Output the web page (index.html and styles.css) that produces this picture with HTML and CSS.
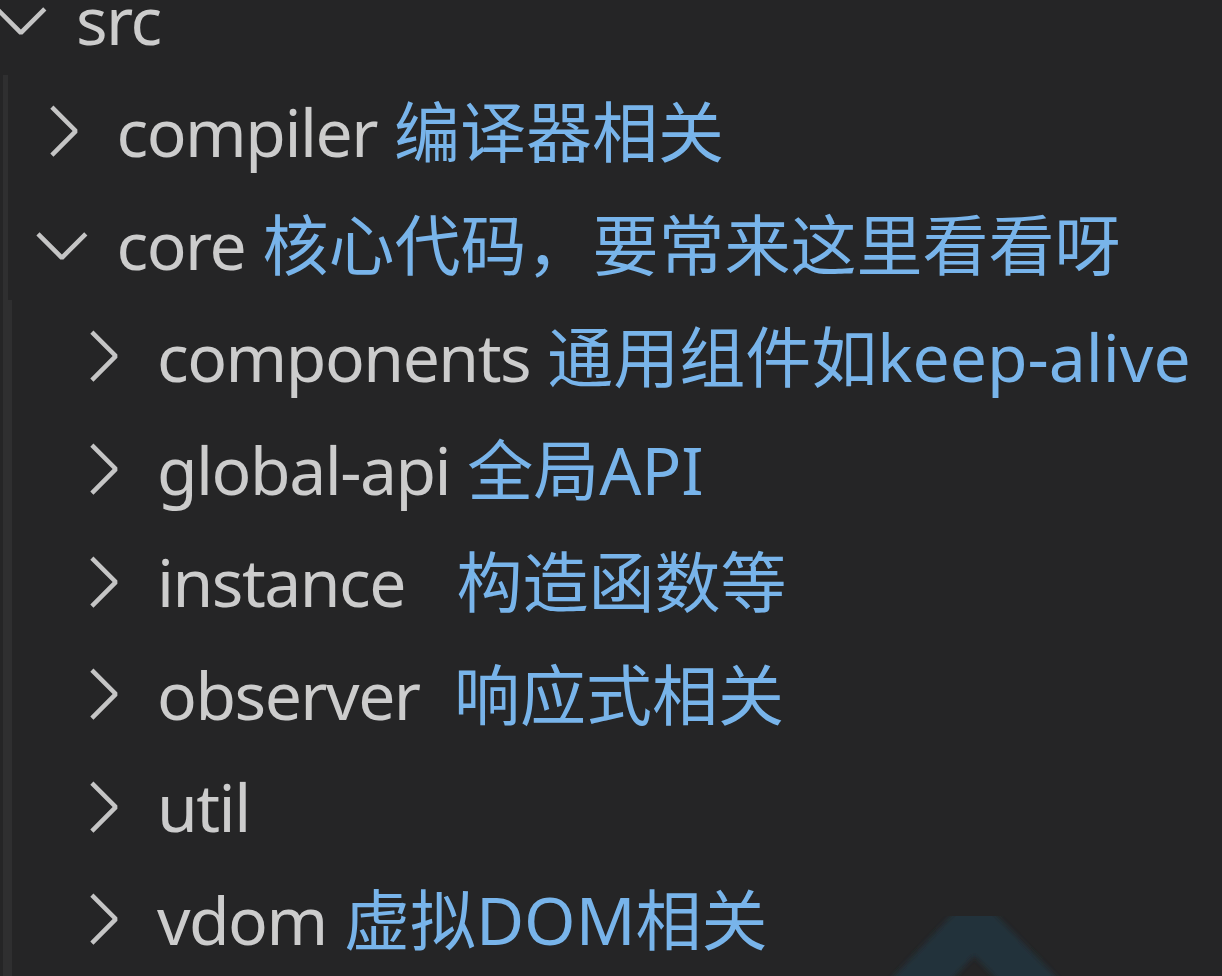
FILE: index.html
```html
<!DOCTYPE html>
<html lang="zh-CN">
<head>
<meta charset="utf-8">
<title>src tree</title>
<link rel="stylesheet" href="styles.css">
</head>
<body>
<div class="tree">
  <div class="row lvl0">
    <svg class="twistie" viewBox="0 0 16 16"><path d="M7.976 10.072l4.357-4.357.62.618L8.284 11h-.618L3 6.333l.619-.618 4.357 4.357z"/></svg>
    <span class="name">src</span>
  </div>
  <div class="group g0">
    <div class="row lvl1">
      <svg class="twistie" viewBox="0 0 16 16"><path d="M10.072 8.024L5.715 3.667l.618-.62L11 7.716v.618L6.333 13l-.618-.619 4.357-4.357z"/></svg>
      <span class="name">compiler</span><span class="note"> 编译器相关</span>
    </div>
    <div class="row lvl1">
      <svg class="twistie" viewBox="0 0 16 16"><path d="M7.976 10.072l4.357-4.357.62.618L8.284 11h-.618L3 6.333l.619-.618 4.357 4.357z"/></svg>
      <span class="name">core</span><span class="note"> 核心代码，要常来这里看看呀</span>
    </div>
    <div class="group g1">
      <div class="row lvl2">
        <svg class="twistie" viewBox="0 0 16 16"><path d="M10.072 8.024L5.715 3.667l.618-.62L11 7.716v.618L6.333 13l-.618-.619 4.357-4.357z"/></svg>
        <span class="name">components</span><span class="note"> 通用组件如keep-alive</span>
      </div>
      <div class="row lvl2">
        <svg class="twistie" viewBox="0 0 16 16"><path d="M10.072 8.024L5.715 3.667l.618-.62L11 7.716v.618L6.333 13l-.618-.619 4.357-4.357z"/></svg>
        <span class="name">global-api</span><span class="note"> 全局API</span>
      </div>
      <div class="row lvl2">
        <svg class="twistie" viewBox="0 0 16 16"><path d="M10.072 8.024L5.715 3.667l.618-.62L11 7.716v.618L6.333 13l-.618-.619 4.357-4.357z"/></svg>
        <span class="name">instance</span><span class="note">   构造函数等</span>
      </div>
      <div class="row lvl2">
        <svg class="twistie" viewBox="0 0 16 16"><path d="M10.072 8.024L5.715 3.667l.618-.62L11 7.716v.618L6.333 13l-.618-.619 4.357-4.357z"/></svg>
        <span class="name">observer</span><span class="note">  响应式相关</span>
      </div>
      <div class="row lvl2">
        <svg class="twistie" viewBox="0 0 16 16"><path d="M10.072 8.024L5.715 3.667l.618-.62L11 7.716v.618L6.333 13l-.618-.619 4.357-4.357z"/></svg>
        <span class="name">util</span>
      </div>
      <div class="row lvl2">
        <svg class="twistie" viewBox="0 0 16 16"><path d="M10.072 8.024L5.715 3.667l.618-.62L11 7.716v.618L6.333 13l-.618-.619 4.357-4.357z"/></svg>
        <span class="name">vdom</span><span class="note"> 虚拟DOM相关</span>
      </div>
    </div>
  </div>
</div>
<svg class="watermark" viewBox="0 0 240 100" aria-hidden="true">
  <defs><filter id="soft"><feGaussianBlur stdDeviation="2.5"/></filter></defs>
  <path d="M30 112 L104 34 L180 112" fill="none" stroke="#21313a" stroke-width="44" stroke-linejoin="round" filter="url(#soft)"/>
</svg>
</body>
</html>
```
FILE: styles.css
```css
html, body {
  margin: 0;
  padding: 0;
  background: #252526;
  width: 1222px;
  height: 976px;
  overflow: hidden;
}

.tree {
  margin-top: -37.5px;
  margin-left: -20px;
  font-family: "Noto Sans", "Noto Sans CJK SC", sans-serif;
  font-size: 66px;
  color: #cccccc;
}

.group {
  position: relative;
}

.group::before {
  content: "";
  position: absolute;
  top: 0;
  bottom: -200px;
  width: 5px;
  background: #2f2f30;
}

.g0::before { left: 23px; }
.g1::before { left: 27px; }

.row {
  display: flex;
  align-items: center;
  height: 112.57px;
  line-height: 112.57px;
  white-space: pre;
}

.lvl0 { padding-left: 0; }
.lvl1 { padding-left: 40.5px; }
.lvl2 { padding-left: 81px; }

.twistie {
  flex: none;
  width: 82px;
  height: 82px;
  fill: #c5c5c5;
  margin-right: 14px;
}

.name {
  color: #cccccc;
  letter-spacing: -1.5px;
}

.note {
  color: #78b4ea;
}

.watermark {
  position: absolute;
  left: 870px;
  top: 890px;
  width: 240px;
  height: 100px;
}
```
